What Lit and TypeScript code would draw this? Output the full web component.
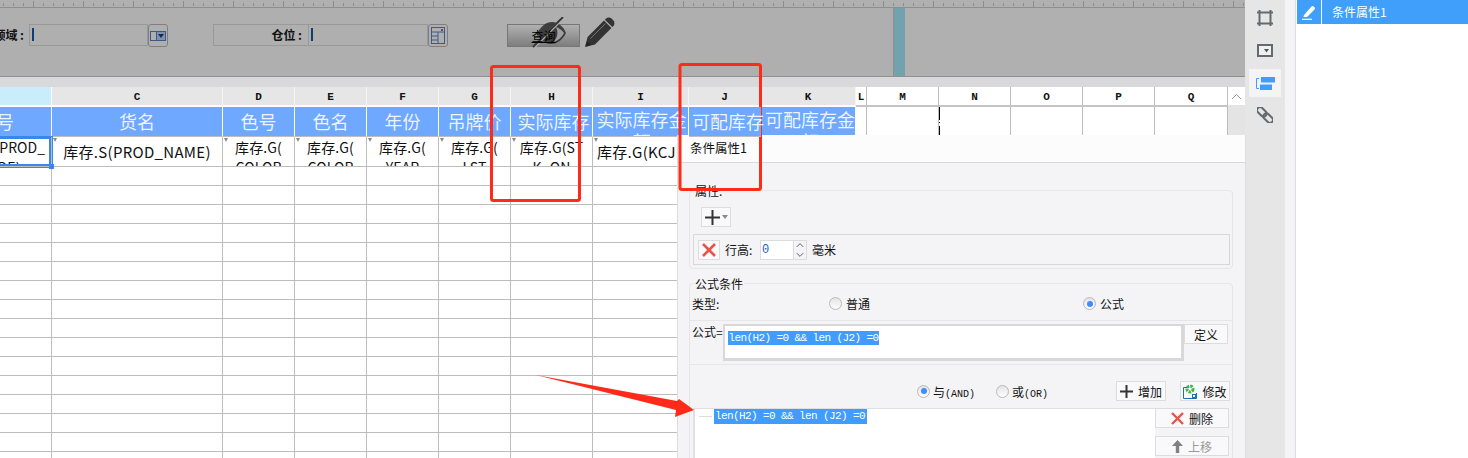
import { LitElement, html, css, svg } from "lit";
import { customElement } from "lit/decorators.js";

const COLS = ["B", "C", "D", "E", "F", "G", "H", "I", "J", "K", "L", "M", "N", "O", "P", "Q"];
const HEADS = ["货号", "货名", "色号", "色名", "年份", "吊牌价", "实际库存", "实际库存金额", "可配库存", "可配库存金额", "", "", "", "", "", ""];
const HEAD_CLS: Record<number, string> = { 6: "h", 7: "two i", 8: "j", 9: "two k" };
const DATA = ["库存.S(PROD_\nCODE)", "库存.S(PROD_NAME)", "库存.G(\nCOLOR", "库存.G(\nCOLOR", "库存.G(\nYEAR", "库存.G(\nLST", "库存.G(ST\nK_ON", "库存.G(KCJE)", "", "", "", "", "", "", "", ""];
const EMPTY_ROWS = 16;
const FORMULA = "len(H2) =0 && len (J2) =0";

const pencil = svg`<path d="M0 30l2.600-10L19 3.600 26.400 11 10 27.400z" fill="#333"/><path d="M20.800 1.800a4.200 4.200 0 0 1 6 0l1.400 1.400a4.200 4.200 0 0 1 0 6l-.9.9-7.400-7.400z" fill="#333"/><path d="M5.500 21.500L20.500 6.500" stroke="#777" stroke-width="1" fill="none"/><path d="M.6 29.400l1.400-5 3.600 3.600z" fill="#222"/>`;
const eye = svg`<path d="M5 16C10 8 15 5 20 5c6 0 11 4 14 11-3 6-8 11-15 11-7 0-11-5-14-11z" fill="#333" opacity=".9"/><path d="M24 10c3 1 6 3 8 6-2 4-6 8-11 9 4-3 6-9 3-15z" fill="#9f9f9f"/><path d="M2 30L31 1" stroke="#b0b0b0" stroke-width="3"/><path d="M1 30L31 0" stroke="#333" stroke-width="1.800"/>`;

@customElement("app-root")
export class AppRoot extends LitElement {
  static styles = css`
    :host { display: block; width: 1468px; height: 458px; font-family: "Noto Sans CJK SC", "Liberation Sans", sans-serif; font-size: 12px; color: #111; }
    * { box-sizing: border-box; }
    .page { position: relative; width: 1468px; height: 458px; overflow: hidden; display: flex; background: #fff; }
    .main { width: 1245px; flex: none; display: flex; flex-direction: column; overflow: hidden; background: #d9d9db; }

    .ruler { height: 8px; flex: none; background-color: #b0b0b0; border-bottom: 1px solid #8e8e8e;
      background-image: repeating-linear-gradient(90deg, #8c8c8c 0 1px, transparent 1px 10px), repeating-linear-gradient(90deg, #8c8c8c 0 1px, transparent 1px 50px);
      background-size: 100% 3px, 100% 6px; background-position: 3px 3px, 33px 1px; background-repeat: repeat-x; }
    .band { height: 69px; flex: none; display: flex; background: #b0b0b0; border-bottom: 1px solid #8f8f8f; }
    .form { width: 894px; flex: none; display: flex; align-items: flex-start; padding-top: 16px; background: #afafaf; border-right: 1px solid #8f8f8f; position: relative; }
    .stripe { width: 11px; flex: none; background: #72a2ae; }
    .lbl-a { width: 29px; height: 22px; flex: none; display: flex; justify-content: flex-end; padding-right: 5px; font-weight: 700; font-size: 12px; line-height: 22px; white-space: pre; overflow: hidden; }
    .lbl-b { width: 95px; height: 22px; flex: none; margin-left: 45px; border: 1px solid #999; border-right: none; font-weight: 700; font-size: 12px; line-height: 20px; text-align: right; padding-right: 6px; white-space: pre; }
    .inp { height: 22px; flex: none; border: 1px solid #999; position: relative; padding: 3px 0 0 2px; }
    .inp i { display: block; width: 2px; height: 13px; background: #0f3f72; }
    .inp-a { width: 119px; }
    .inp-b { width: 120px; }
    .pick { width: 20px; height: 23px; flex: none; border: 1px solid #7f7f7f; border-radius: 3px; display: flex; align-items: center; justify-content: center; }
    .query { width: 73px; height: 23px; flex: none; margin-left: 59px; border: 1px solid #777; background: linear-gradient(#b0b0b0, #7e7e7e); font-size: 12px; line-height: 21px; text-align: center; text-decoration: underline; color: #000; }
    .query span { position: relative; z-index: 2; }
    .eye { position: absolute; z-index: 1; left: 532px; top: 9px; width: 34px; height: 31px; }
    .pen { position: absolute; left: 585px; top: 9px; width: 30px; height: 30px; }
    .band-right { flex: 1; }

    .gap { height: 10px; flex: none; background: #d9d9db; }
    .sheet { flex: 1; display: flex; min-height: 0; background: #fff; }
    .grid-wrap { width: 1228px; flex: none; overflow: hidden; }
    .grid { margin-left: -59px; display: grid; grid-template-columns: 111px 171px 72px 72px 72px 72px 82px 96px 72px 95px 11px 72px 72px 72px 72px 73px; grid-template-rows: 20px 30px 30px; grid-auto-rows: 19px; width: 1287px; }
    .c { border-right: 1px solid #bdbdbd; border-bottom: 1px solid #bdbdbd; position: relative; min-width: 0; }
    .letter { font: 700 11px/20px "Liberation Mono", monospace; text-align: center; background: #fff; color: #111; border-bottom: 2px solid #c4c4c4; }
    .letter.grey { background: #e6e6e6; border-right-color: #f4f4f4; border-bottom-color: #fff; }
    .letter.sel { background: #c9edfb; border-right-color: #fff; border-bottom-color: #fff; }
    .letter.nodiv { border-right-color: #e6e6e6; }
    .head { background: #6fa8ff; color: rgba(255, 255, 255, .88); font-size: 18px; line-height: 27px; text-align: center; overflow: hidden; border-right-color: #fff; border-bottom-color: #bdbdbd; padding-top: 1px; }
    .head.h { padding-left: 4px; }
    .head.two { line-height: 22px; }
    .head.i { padding-left: 2px; }
    .head.j { border-right-color: #6fa8ff; padding-left: 3px; white-space: nowrap; overflow: visible; z-index: 1; }
    .head.k { padding-left: 4px; }
    .head.blank { background: #fff; border-right-color: #bdbdbd; }
    .data { font-size: 14px; line-height: 20px; text-align: center; white-space: pre-line; overflow: hidden; color: #111; letter-spacing: .1px; }
    .data.tag::before { content: ""; position: absolute; left: 1px; top: 1px; width: 0; height: 0; border: 2px solid transparent; border-top: 4px solid #8a8a8a; }
    .data.one { font-size: 15px; letter-spacing: .3px; line-height: 30px; white-space: nowrap; }
    .data.left { text-align: left; padding-left: 4px; }
    .data.b { padding-left: 7px; overflow: visible; box-shadow: inset 0 0 0 2px #3a86f0, 0 0 0 1px #3a86f0; z-index: 1; }
    .clip { display: block; height: 27px; overflow: hidden; }
    .data.b::after { content: ""; position: absolute; right: -3px; bottom: -3px; width: 5px; height: 5px; background: #3a86f0; }
    .dash::before { content: ""; position: absolute; left: 0; top: 0; width: 1px; height: 28px; background: linear-gradient(#000 0 13px, transparent 13px 15px, #000 15px 16px, transparent 16px 19px, #000 19px); }

    .scroll { width: 17px; flex: none; background: #e4e4e4; }
    .scroll-up { height: 18px; background: #fff; display: flex; align-items: center; justify-content: center; }

    .rail { width: 40px; flex: none; background: #e6e6e6; display: flex; flex-direction: column; align-items: center; padding-top: 10px; }
    .rail svg { display: block; }
    .rail-drop { margin-top: 18px; }
    .rail-act { width: 32px; height: 28px; margin-top: 12px; background: #f4f4f6; display: flex; align-items: center; justify-content: center; }
    .rail-link { margin-top: 10px; }
    .strip { width: 11px; flex: none; background: #f4f4f6; border-right: 1px solid #ddd; }
    .panel { flex: 1; background: #fff; }
    .panel-row { height: 24px; margin-left: 1px; background: #409ffa; display: flex; color: #fff; }
    .panel-ic { width: 25px; flex: none; border-right: 1px solid #fff; display: flex; align-items: center; justify-content: center; }
    .panel-t { padding-left: 10px; font-size: 12px; line-height: 24px; }

    .dialog { position: absolute; left: 677px; top: 135px; width: 569px; height: 323px; background: #f4f4f6; border-left: 1px solid #ddd; border-right: 1px solid #ddd; overflow: hidden; display: flex; flex-direction: column; }
    .d-title { height: 28px; flex: none; background: #fcfcfc; border-bottom: 1px solid #d9d9d9; padding-left: 12px; font-size: 12.500px; line-height: 26px; color: #111; }
    .group { position: relative; width: 544px; margin-left: 11px; border: 1px solid #e6e6e8; border-radius: 4px; flex: none; }
    .g1 { margin-top: 27px; height: 79px; padding-top: 16px; }
    .g2 { margin-top: 14px; height: 220px; }
    .legend { position: absolute; left: 5px; top: -9px; background: #f4f4f6; font-size: 12px; line-height: 18px; padding-right: 1px; }
    .btn { background: #f9f9fb; border: 1px solid #dcdcdc; display: flex; align-items: center; justify-content: center; gap: 5px; font-size: 12px; color: #111; flex: none; }
    .plus { width: 30px; height: 20px; margin-left: 11px; gap: 2px; }
    .attr { margin: 7px 0 0 3px; width: 537px; height: 31px; border: 1px solid #d8d8da; display: flex; align-items: center; padding-left: 4px; }
    .x { width: 22px; height: 20px; }
    .attr-l { margin-left: 5px; width: 35px; }
    .spin { width: 47px; height: 20px; flex: none; display: flex; border: 1px solid #dcdcdc; background: #fff; }
    .spin b { flex: 1; font: 400 12px/18px "Liberation Mono", monospace; color: #1d5fc0; padding-left: 1px; }
    .spin-btns { width: 13px; flex: none; display: flex; flex-direction: column; background: #f4f4f6; border-left: 1px solid #dcdcdc; }
    .spin-btns svg { flex: 1; display: block; min-height: 0; }
    .unit { margin-left: 5px; }

    .row-type { height: 37px; display: flex; align-items: center; padding: 3px 0 0 2px; border-bottom: 1px solid #e6e6e8; }
    .t-label { width: 137px; flex: none; }
    .radio { display: flex; align-items: center; gap: 4px; flex: none; white-space: nowrap; }
    .radio i { display: flex; align-items: center; justify-content: center; width: 13px; height: 13px; border-radius: 50%; border: 1px solid #b9b9b9; background: linear-gradient(#e4e4e4, #fdfdfd); flex: none; }
    .radio.on i::after { content: ""; width: 6px; height: 6px; border-radius: 50%; background: #3f8cff; }
    .radio small { font: 10px "Liberation Mono", monospace; }
    .r1 { width: 254px; }
    .row-formula { margin-top: 3px; height: 41px; display: flex; align-items: flex-start; padding-left: 2px; border-bottom: 1px solid #e6e6e8; }
    .f-label { width: 31px; flex: none; line-height: 14px; padding-top: 1px; white-space: nowrap; }
    .f-box { width: 461px; height: 37px; flex: none; display: flex; align-items: flex-start; background: #fff; border: 2px solid #d8d8da; border-width: 2px 3px 3px 2px; padding: 5px 0 0 3px; }
    .sel { display: block; background: #409cff; color: #fff; font: 11px/14px "Liberation Mono", monospace; letter-spacing: -.6px; padding: 0 .5px; white-space: pre; }
    .def { width: 44px; height: 20px; }
    .row-logic { height: 43px; display: flex; align-items: center; padding: 9px 0 0 227px; }
    .r-and { width: 79px; gap: 3px; }
    .r-or { width: 120px; gap: 3px; }
    .wide { width: 50px; height: 20px; gap: 5px; }
    .mod { margin-left: 14px; }
    .row-list { display: flex; margin-left: 3px; }
    .list { width: 462px; height: 60px; flex: none; background: #fff; border-top: 1px solid #dfdfe4; border-left: 2px solid #dfdfe4; display: flex; align-items: flex-start; }
    .tree { width: 13px; height: 1px; background: #ddd; margin: 7px 2px 0 4px; flex: none; }
    .list .sel { line-height: 15px; padding: 0 2px 0 1px; }
    .side { width: 74px; flex: none; display: flex; flex-direction: column; gap: 8px; }
    .side .btn { height: 20px; }
    .dim { color: #999; }

    .marks { position: absolute; inset: 0; width: 1468px; height: 458px; pointer-events: none; }
  `;

  render() {
    return html`<div class="page">
      <div class="main">
        <div class="ruler"></div>
        <div class="band">
          <div class="form">
            <div class="lbl-a">领域 :</div>
            <div class="inp inp-a"><i></i></div>
            <div class="pick">
              <svg width="16" height="10" viewBox="0 0 16 10"><rect x=".5" y=".5" width="6" height="9" fill="none" stroke="#3a5a8c"/><rect x="6.500" y=".5" width="9" height="9" fill="#8090ad" stroke="#3a5a8c"/><path d="M8 3h6l-3 4z" fill="#0f2c55"/></svg>
            </div>
            <div class="lbl-b">仓位 :</div>
            <div class="inp inp-b"><i></i></div>
            <div class="pick">
              <svg width="14" height="17" viewBox="0 0 14 17"><rect x=".5" y=".5" width="13" height="16" fill="none" stroke="#3a5a8c"/><path d="M.5 5h13M7 5v11M1 9h6M1 13h6" stroke="#3a5a8c" fill="none"/><rect x="10" y="2" width="2" height="2" fill="#3a5a8c"/></svg>
            </div>
            <div class="query"><span>查询</span></div>
            <svg class="eye" viewBox="0 0 34 31">${eye}</svg>
            <svg class="pen" viewBox="0 0 30 30">${pencil}</svg>
          </div>
          <div class="stripe"></div>
          <div class="band-right"></div>
        </div>
        <div class="gap"></div>
        <div class="sheet">
          <div class="grid-wrap"><div class="grid">${this.cells()}</div></div>
          <div class="scroll">
            <div class="scroll-up"><svg width="11" height="7" viewBox="0 0 11 7"><path d="M1 6l4.500-4.500L10 6" fill="none" stroke="#999"/></svg></div>
          </div>
        </div>
      </div>
      <div class="rail">
        <svg width="16" height="16" viewBox="0 0 16 16"><path d="M2.500 0v16M13.500 0v16M0 2.500h16M0 13.500h16" stroke="#666a70" stroke-width="2" fill="none"/></svg>
        <svg class="rail-drop" width="16" height="13" viewBox="0 0 16 13"><rect x="1" y="1" width="14" height="11" fill="#f0f0f0" stroke="#666a70" stroke-width="2"/><path d="M7 5h5l-2.500 3.500z" fill="#555"/></svg>
        <div class="rail-act"><svg width="19" height="13" viewBox="0 0 19 13"><path d="M3 1.500H.5v10H3" fill="none" stroke="#409cff"/><rect x="5" y="0" width="14" height="5.500" fill="#409cff"/><rect x="4" y="7.500" width="12" height="5.500" fill="#409cff"/></svg></div>
        <svg class="rail-link" width="16" height="16" viewBox="0 0 16 16" fill="none" stroke="#666a70" stroke-width="2"><g transform="rotate(45 8 8)"><rect x="-2" y="5" width="11" height="6" rx="3"/><rect x="7" y="5" width="11" height="6" rx="3"/></g></svg>
      </div>
      <div class="strip"></div>
      <div class="panel">
        <div class="panel-row">
          <div class="panel-ic"><svg width="15" height="15" viewBox="0 0 15 15"><path d="M2 10L9.500 1.500a1.500 1.500 0 0 1 2.200 0l.8.800a1.500 1.500 0 0 1 0 2.200L5 12H1.500z" fill="#fff"/><path d="M0 14.300h10" stroke="#fff" stroke-width="1.200"/></svg></div>
          <div class="panel-t">条件属性1</div>
        </div>
      </div>

      <div class="dialog">
        <div class="d-title">条件属性1</div>
        <div class="group g1">
          <span class="legend">属性:</span>
          <div class="btn plus">
            <svg width="15" height="15" viewBox="0 0 15 15"><path d="M0 7.500h15M7.500 0v15" stroke="#333" stroke-width="2"/></svg>
            <svg width="6" height="4" viewBox="0 0 6 4"><path d="M0 0h6L3 4z" fill="#888"/></svg>
          </div>
          <div class="attr">
            <div class="btn x"><svg width="14" height="14" viewBox="0 0 14 14"><path d="M1 1l12 12M13 1L1 13" stroke="#e8534a" stroke-width="2.600"/></svg></div>
            <span class="attr-l">行高:</span>
            <div class="spin">
              <b>0</b>
              <div class="spin-btns">
                <svg viewBox="0 0 13 9"><path d="M3 6l3.500-3.500L10 6" fill="none" stroke="#555"/></svg>
                <svg viewBox="0 0 13 9"><path d="M3 3l3.500 3.500L10 3" fill="none" stroke="#555"/></svg>
              </div>
            </div>
            <span class="unit">毫米</span>
          </div>
        </div>
        <div class="group g2">
          <span class="legend">公式条件</span>
          <div class="row-type">
            <span class="t-label">类型:</span>
            <label class="radio r1"><i></i>普通</label>
            <label class="radio on"><i></i>公式</label>
          </div>
          <div class="row-formula">
            <span class="f-label">公式=</span>
            <div class="f-box"><span class="sel">${FORMULA}</span></div>
            <div class="btn def">定义</div>
          </div>
          <div class="row-logic">
            <label class="radio on r-and"><i></i><span>与<small>(AND)</small></span></label>
            <label class="radio r-or"><i></i><span>或<small>(OR)</small></span></label>
            <div class="btn wide"><svg width="13" height="13" viewBox="0 0 13 13"><path d="M0 6.500h13M6.500 0v13" stroke="#333" stroke-width="2"/></svg>增加</div>
            <div class="btn wide mod"><svg width="14" height="15" viewBox="0 0 14 15"><path d="M5 3.500H.5v11h13V9" fill="none" stroke="#1f6fb5"/><circle cx="7" cy="5" r="3" fill="none" stroke="#3fb54a" stroke-width="3" stroke-dasharray="2.500 1"/><rect x="9.500" y="10.500" width="3" height="3" fill="#fff" stroke="#1f6fb5"/></svg>修改</div>
          </div>
          <div class="row-list">
            <div class="list"><span class="tree"></span><span class="sel">${FORMULA}</span></div>
            <div class="side">
              <div class="btn"><svg width="13" height="13" viewBox="0 0 13 13"><path d="M1 1l11 11M12 1L1 12" stroke="#e8534a" stroke-width="2.400"/></svg>删除</div>
              <div class="btn dim"><svg width="11" height="13" viewBox="0 0 11 13"><path d="M5.500 0L11 6H7.200v7H3.800V6H0z" fill="#808080"/></svg>上移</div>
            </div>
          </div>
        </div>
      </div>

      <svg class="marks" viewBox="0 0 1468 458">
        <rect x="491.500" y="66.500" width="88" height="134" rx="2" fill="none" stroke="#ff2a1a" stroke-width="3"/>
        <rect x="680" y="64.500" width="80.500" height="125" rx="2" fill="none" stroke="#ff2a1a" stroke-width="3"/>
        <polygon points="536,375 677,401 679,399 694,410 675,417 676,410" fill="#ff2a1a"/>
      </svg>
    </div>`;
  }

  cells() {
    const out = [];
    COLS.forEach((c, i) => {
      const cls = i === 0 ? "sel" : i < 10 ? "grey" : "";
      out.push(html`<div class="c letter ${cls} ${i === 8 ? "nodiv" : ""}">${c}</div>`);
    });
    HEADS.forEach((h, i) => {
      const cls = h ? HEAD_CLS[i] ?? "" : "blank";
      out.push(html`<div class="c head ${cls} ${i === 12 ? "dash" : ""}">${h}</div>`);
    });
    DATA.forEach((d, i) => {
      const single = i === 1 || i === 7;
      const cls = [d ? "tag" : "", single ? "one" : "", i === 7 ? "left" : "", i === 0 ? "b" : ""].join(" ");
      out.push(html`<div class="c data ${cls}">${i === 0 ? html`<span class="clip">${d}</span>` : d}</div>`);
    });
    for (let r = 0; r < EMPTY_ROWS; r++) {
      COLS.forEach(() => out.push(html`<div class="c"></div>`));
    }
    return out;
  }
}
